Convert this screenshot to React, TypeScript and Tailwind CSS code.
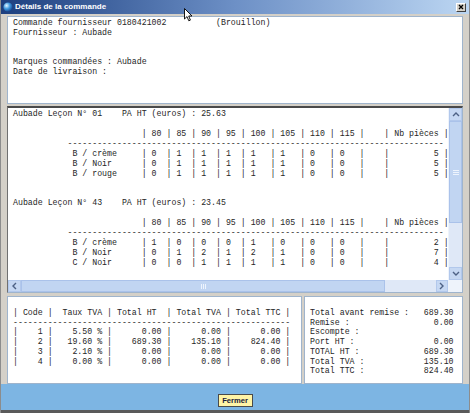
import React from "react";

const SIZES = [80, 85, 90, 95, 100, 105, 110, 115];

type Row = { label: string; qty: number[]; total: number };
type Model = { title: string; price: string; rows: Row[] };

const MODELS: Model[] = [
  {
    title: "Aubade Leçon N° 01",
    price: "25.63",
    rows: [
      { label: "B / crème", qty: [0, 1, 1, 1, 1, 1, 0, 0], total: 5 },
      { label: "B / Noir", qty: [0, 1, 1, 1, 1, 1, 0, 0], total: 5 },
      { label: "B / rouge", qty: [0, 1, 1, 1, 1, 1, 0, 0], total: 5 },
    ],
  },
  {
    title: "Aubade Leçon N° 43",
    price: "23.45",
    rows: [
      { label: "B / crème", qty: [1, 0, 0, 0, 1, 0, 0, 0], total: 2 },
      { label: "B / Noir", qty: [0, 1, 2, 1, 2, 1, 0, 0], total: 7 },
      { label: "C / Noir", qty: [0, 0, 1, 1, 1, 1, 0, 0], total: 4 },
    ],
  },
];

const TVA = [
  ["1", "5.50", "0.00", "0.00", "0.00"],
  ["2", "19.60", "689.30", "135.10", "824.40"],
  ["3", "2.10", "0.00", "0.00", "0.00"],
  ["4", "0.00", "0.00", "0.00", "0.00"],
];

const TOTALS: [string, string][] = [
  ["Total avant remise :", "689.30"],
  ["Remise :", "0.00"],
  ["Escompte :", ""],
  ["Port HT :", "0.00"],
  ["TOTAL HT :", "689.30"],
  ["Total TVA :", "135.10"],
  ["Total TTC :", "824.40"],
];

// lignes du détail par modèle (texte à chasse fixe)
function modelLines(m: Model, last: boolean) {
  const header =
    " ".repeat(26) + SIZES.map((s) => `| ${s} `).join("") + "|    | Nb pièces |";
  const dashes = " ".repeat(11) + "-".repeat(76);
  const rows = m.rows.map(
    (r) =>
      " ".repeat(12) +
      r.label.padEnd(14) +
      r.qty.map((q, i) => `| ${q}`.padEnd(SIZES[i] >= 100 ? 6 : 5)).join("") +
      "|    |" +
      String(r.total).padStart(10) +
      " |"
  );
  const out = [`${m.title}    PA HT (euros) : ${m.price}`, "", header, dashes, ...rows];
  return last ? out : [...out, "", ""];
}

const mono = "font-['Liberation_Mono',monospace] text-[8.25px] text-[#262626] whitespace-pre";

function Chevron({ dir }: { dir: "up" | "down" | "left" | "right" }) {
  const pts = {
    up: "1,5 4,2 7,5",
    down: "1,2 4,5 7,2",
    left: "5,1 2,4 5,7",
    right: "2,1 5,4 2,7",
  }[dir];
  return (
    <svg width="8" height="8" viewBox="0 0 8 8">
      <polyline points={pts} fill="none" stroke="#4d6185" strokeWidth="1.4" />
    </svg>
  );
}

function Grip({ vertical }: { vertical?: boolean }) {
  return vertical ? (
    <div className="flex flex-col gap-[1px]">
      <div className="w-[6px] h-[1px] bg-[#eef4fd]" />
      <div className="w-[6px] h-[1px] bg-[#eef4fd]" />
      <div className="w-[6px] h-[1px] bg-[#eef4fd]" />
    </div>
  ) : (
    <div className="flex gap-[1px]">
      <div className="w-[1px] h-[5px] bg-[#eef4fd]" />
      <div className="w-[1px] h-[5px] bg-[#eef4fd]" />
      <div className="w-[1px] h-[5px] bg-[#eef4fd]" />
    </div>
  );
}

export default function App() {
  const header = "| Code |  Taux TVA | Total HT  | Total TVA | Total TTC |";
  const tvaLines = [
    "",
    header,
    "-".repeat(56),
    ...TVA.map(
      ([c, r, ht, tva, ttc]) =>
        `|${c.padStart(5)} |${(r + " %").padStart(10)} |${ht.padStart(10)} |${tva.padStart(10)} |${ttc.padStart(10)} |`
    ),
  ];
  const totalLines = ["", ...TOTALS.map(([l, v]) => l + v.padStart(29 - l.length))];
  const detail = [...modelLines(MODELS[0], false), ...modelLines(MODELS[1], true)];

  return (
    <div className="w-[470px] h-[413px] bg-[#d4d0c8] flex flex-col relative overflow-hidden border-x border-[#8c8c8c]">
      {/* Barre de titre */}
      <div className="h-[14px] flex items-center bg-gradient-to-r from-[#1d3f7f] via-[#6d90c6] to-[#bcd6f2] pl-[2px] pr-[3px]">
        <svg width="10" height="10" viewBox="0 0 10 10" className="mr-[2px]">
          <defs>
            <radialGradient id="g" cx="0.35" cy="0.35" r="0.7">
              <stop offset="0" stopColor="#e6f6ff" />
              <stop offset="0.5" stopColor="#3f9be0" />
              <stop offset="1" stopColor="#14448e" />
            </radialGradient>
          </defs>
          <circle cx="5" cy="5" r="4.6" fill="url(#g)" />
        </svg>
        <span className="font-['Liberation_Sans',sans-serif] font-bold text-[8px] text-white leading-none">
          Détails de la commande
        </span>
        <div className="ml-auto w-[10px] h-[9px] bg-[#d4d0c8] border border-t-white border-l-white border-r-[#404040] border-b-[#404040] flex items-center justify-center">
          <svg width="6" height="6" viewBox="0 0 6 6">
            <path d="M1 1 L5 5 M5 1 L1 5" stroke="#000" strokeWidth="1.3" />
          </svg>
        </div>
      </div>

      <div className="flex-1 flex flex-col px-[6px] pt-[2px]">
        {/* En-tête de la commande */}
        <div className="h-[88px] bg-white border border-[#9fb4cc] pl-[5px] pt-[1px] leading-[9.8px]">
          <div className={mono}>
            {[
              "Commande fournisseur 0180421002          (Brouillon)",
              "Fournisseur : Aubade",
              "",
              "",
              "Marques commandées : Aubade",
              "Date de livraison :",
            ].map((l, i) => (
              <div key={i} className="h-[9.8px]">{l}</div>
            ))}
          </div>
        </div>

        {/* Détail par modèle */}
        <div className="mt-[2px] h-[187px] flex flex-col bg-white border-t-2 border-t-[#4a4a4a] border-l border-l-[#707070] border-r border-r-[#9fb4cc] border-b border-b-[#9fb4cc]">
          <div className="flex-1 flex min-h-0">
            <div className="flex-1 overflow-hidden pl-[5px] pt-[1px]">
              <div className={mono}>
                {detail.map((l, i) => (
                  <div key={i} className="h-[9.93px] leading-[9.93px]">{l}</div>
                ))}
              </div>
            </div>
            <div className="w-[14px] flex flex-col bg-[#dfe8f7] border-l border-[#eef3fb]">
              <div className="h-[13px] bg-[#c6d8f3] border border-[#b2c8ec] flex items-center justify-center">
                <Chevron dir="up" />
              </div>
              <div className="h-[102px] bg-[#c1d5f2] border border-[#aac2ea] flex items-center justify-center">
                <Grip vertical />
              </div>
              <div className="flex-1" />
              <div className="h-[13px] bg-[#c6d8f3] border border-[#b2c8ec] flex items-center justify-center">
                <Chevron dir="down" />
              </div>
            </div>
          </div>
          <div className="h-[12px] flex">
            <div className="flex-1 flex bg-[#dfe8f7]">
              <div className="w-[13px] bg-[#c6d8f3] border border-[#b2c8ec] flex items-center justify-center">
                <Chevron dir="left" />
              </div>
              <div className="w-[364px] bg-[#c1d5f2] border border-[#aac2ea] flex items-center justify-center">
                <Grip />
              </div>
              <div className="flex-1" />
              <div className="w-[12px] bg-[#c6d8f3] border border-[#b2c8ec] flex items-center justify-center">
                <Chevron dir="right" />
              </div>
            </div>
            <div className="w-[14px] bg-[#eef3fb]" />
          </div>
        </div>

        {/* Récapitulatif TVA et totaux */}
        <div className="mt-[3px] h-[88px] flex gap-[2px]">
          <div className="w-[295px] bg-white border border-[#9fb4cc] pl-[5px] pt-[1px]">
            <div className={mono}>
              {tvaLines.map((l, i) => (
                <div key={i} className="h-[9.75px] leading-[9.75px]">{l}</div>
              ))}
            </div>
          </div>
          <div className="flex-1 bg-white border border-[#9fb4cc] pl-[5px] pt-[1px]">
            <div className={mono}>
              {totalLines.map((l, i) => (
                <div key={i} className="h-[9.75px] leading-[9.75px]">{l}</div>
              ))}
            </div>
          </div>
        </div>
      </div>

      {/* Pied */}
      <div className="h-[26px] bg-[#7db5e3] flex justify-center pt-[10px]">
        <button className="w-[35px] h-[13px] bg-[#fff4a6] border border-[#4a4a4a] flex items-center justify-center font-['Liberation_Sans',sans-serif] font-bold text-[7.6px] text-[#1a1a3a] leading-none">
          Fermer
        </button>
      </div>
      <div className="h-[3px] bg-[#5a5a5a]" />

      {/* Curseur de la souris */}
      <svg className="absolute left-[183px] top-[8px]" width="9" height="14" viewBox="0 0 9 14">
        <path d="M0.5 0.5 L0.5 11 L3 8.6 L4.8 12.8 L6.4 12.1 L4.7 8 L8 8 Z" fill="#fff" stroke="#000" strokeWidth="0.9" />
      </svg>
    </div>
  );
}
